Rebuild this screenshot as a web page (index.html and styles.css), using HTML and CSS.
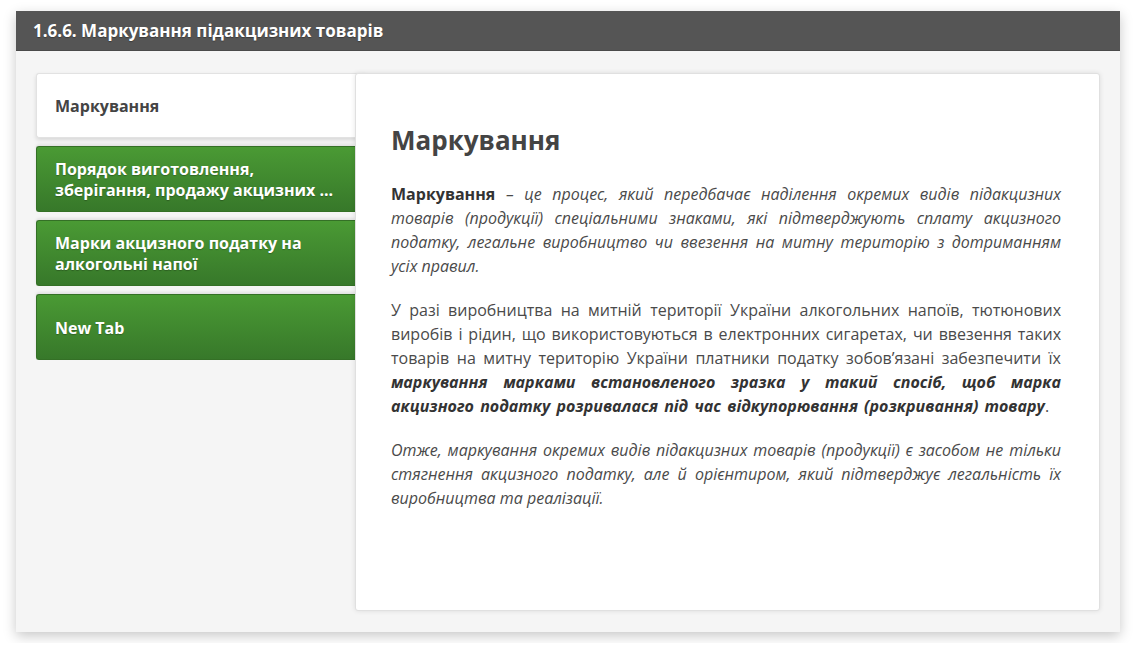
FILE: index.html
```html
<!DOCTYPE html>
<html lang="uk">
<head>
<meta charset="utf-8">
<title>1.6.6. Маркування підакцизних товарів</title>
<link rel="stylesheet" href="styles.css">
</head>
<body>
<div class="card">
  <div class="card-header">1.6.6. Маркування підакцизних товарів</div>
  <div class="card-body">
    <div class="tabs">
      <div class="tab tab-active">Маркування</div>
      <div class="tab tab-green">Порядок виготовлення, зберігання, продажу акцизних ...</div>
      <div class="tab tab-green">Марки акцизного податку на алкогольні напої</div>
      <div class="tab tab-green">New Tab</div>
    </div>
    <div class="panel">
      <h1 class="panel-title">Маркування</h1>
      <p class="para"><b>Маркування</b> <i>– це процес, який передбачає наділення окремих видів підакцизних товарів (продукції) спеціальними знаками, які підтверджують сплату акцизного податку, легальне виробництво чи ввезення на митну територію з дотриманням усіх правил.</i></p>
      <p class="para">У разі виробництва на митній території України алкогольних напоїв, тютюнових виробів і рідин, що використовуються в електронних сигаретах, чи ввезення таких товарів на митну територію України платники податку зобов’язані забезпечити їх <b class="em-strong"><i>маркування марками встановленого зразка у такий спосіб, щоб марка акцизного податку розривалася під час відкупорювання (розкривання) товару</i></b>.</p>
      <p class="para"><i>Отже, маркування окремих видів підакцизних товарів (продукції) є засобом не тільки стягнення акцизного податку, але й орієнтиром, який підтверджує легальність їх виробництва та реалізації.</i></p>
    </div>
  </div>
</div>
</body>
</html>
```
FILE: styles.css
```css
html, body {
  margin: 0;
  padding: 0;
  background: #ffffff;
}
body {
  padding: 11px 16px;
  font-family: "Open Sans", "Noto Sans", sans-serif;
  color: #444;
}
.card {
  width: 1104px;
  height: 621px;
  background: #f5f5f5;
  box-shadow: 0 4px 12px rgba(0, 0, 0, 0.22);
  display: flex;
  flex-direction: column;
}
.card-header {
  height: 40px;
  background: #555555;
  color: #fff;
  font-weight: 700;
  font-size: 17px;
  line-height: 40px;
  padding-left: 17px;
  border-bottom: 1px solid #4a4a4a;
  box-sizing: border-box;
  text-shadow: 0 1px 1px rgba(0,0,0,0.3);
}
.card-body {
  flex: 1;
  display: flex;
  padding: 22px 20px 21px 20px;
}
.tabs {
  width: 319px;
  display: flex;
  flex-direction: column;
  gap: 8px;
  position: relative;
  z-index: 1;
}
.tab {
  height: 66px;
  box-sizing: border-box;
  display: flex;
  align-items: center;
  padding: 2px 18px 0 18px;
  font-weight: 700;
  font-size: 16px;
  line-height: 21px;
  border-radius: 3px 0 0 3px;
}
.tab-active {
  height: 65px;
  background: #fff;
  color: #444;
  border: 1px solid #e2e2e2;
  border-right: none;
  box-shadow: 0 2px 4px rgba(0,0,0,0.12);
  width: 330px;
  z-index: 3;
  position: relative;
}
.tab-green {
  background: linear-gradient(#4a9a34, #37782a);
  color: #fff;
  border: 1px solid #347026;
  border-right: none;
  box-shadow: 0 -2px 3px rgba(0,0,0,0.08);
  text-shadow: 0 1px 1px rgba(0,0,0,0.25);
}
.panel {
  flex: 1;
  background: #fff;
  border: 1px solid #e0e0e0;
  border-radius: 3px;
  box-shadow: 0 0 5px rgba(0,0,0,0.1);
  padding: 51px 38px 0 35px;
  position: relative;
  z-index: 2;
}
.panel-title {
  margin: 0 0 26px 0;
  font-size: 26px;
  font-weight: 700;
  line-height: 31px;
  color: #444;
}
.para {
  margin: 0 0 20px 0;
  font-size: 16px;
  line-height: 24px;
  text-align: justify;
  color: #4a4a4a;
}
.para b {
  color: #333;
}
.em-strong {
  word-spacing: 2px;
}
```
